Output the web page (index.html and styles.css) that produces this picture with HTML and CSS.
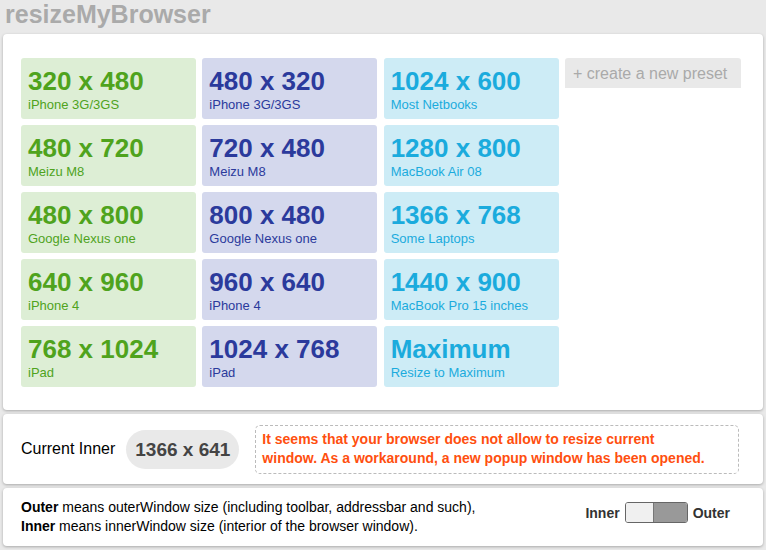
FILE: index.html
```html
<!DOCTYPE html>
<html lang="en">
<head>
    <meta charset="UTF-8">
    <meta name="viewport" content="width=device-width, initial-scale=1.0">
    <title>resizeMyBrowser</title>
    <link rel="stylesheet" href="styles.css">
</head>
<body>

    <h1 class="logo">resizeMyBrowser</h1>

    <div class="panel presets">
        <div class="col green">
            <a class="preset"><b>320 x 480</b><span>iPhone 3G/3GS</span></a>
            <a class="preset"><b>480 x 720</b><span>Meizu M8</span></a>
            <a class="preset"><b>480 x 800</b><span>Google Nexus one</span></a>
            <a class="preset"><b>640 x 960</b><span>iPhone 4</span></a>
            <a class="preset"><b>768 x 1024</b><span>iPad</span></a>
        </div>
        <div class="col blue">
            <a class="preset"><b>480 x 320</b><span>iPhone 3G/3GS</span></a>
            <a class="preset"><b>720 x 480</b><span>Meizu M8</span></a>
            <a class="preset"><b>800 x 480</b><span>Google Nexus one</span></a>
            <a class="preset"><b>960 x 640</b><span>iPhone 4</span></a>
            <a class="preset"><b>1024 x 768</b><span>iPad</span></a>
        </div>
        <div class="col cyan">
            <a class="preset"><b>1024 x 600</b><span>Most Netbooks</span></a>
            <a class="preset"><b>1280 x 800</b><span>MacBook Air 08</span></a>
            <a class="preset"><b>1366 x 768</b><span>Some Laptops</span></a>
            <a class="preset"><b>1440 x 900</b><span>MacBook Pro 15 inches</span></a>
            <a class="preset"><b>Maximum</b><span>Resize to Maximum</span></a>
        </div>
        <a class="new-preset">+ create a new preset</a>
    </div>

    <div class="panel current">
        <span class="current-label">Current Inner</span>
        <span class="current-size">1366 x 641</span>
        <div class="warning">It seems that your browser does not allow to resize current<br>
        window. As a workaround, a new popup window has been opened.</div>
    </div>

    <div class="panel info">
        <p class="info-text"><b>Outer</b> means outerWindow size (including toolbar, addressbar and such),<br>
        <b>Inner</b> means innerWindow size (interior of the browser window).</p>
        <div class="mode">
            <span>Inner</span>
            <span class="switch"><i class="switch-on"></i><i class="switch-off"></i></span>
            <span>Outer</span>
        </div>
    </div>

</body>
</html>
```

FILE: styles.css
```css
body {
    font-family: Arial, "Liberation Sans", sans-serif;
    background-color: #e9e9e9;
    margin: 0;
    padding: 0 3px;
}
.logo {
    font-size: 25px;
    line-height: 28px;
    color: #aaa;
    margin: 0 0 6px 2px;
}
.panel {
    background: white;
    border-radius: 4px;
    box-shadow: 0 1px 3px rgba(0,0,0,0.28);
    margin-bottom: 4px;
}
.presets {
    display: flex;
    gap: 6.33px;
    padding: 24px 18px 23px;
}
.col {
    display: flex;
    flex-direction: column;
    gap: 6px;
    width: 175px;
}
.preset {
    display: block;
    height: 61px;
    box-sizing: border-box;
    padding: 8px 7px 7px;
    border-radius: 3px;
    cursor: pointer;
}
.preset b {
    display: block;
    font-size: 26px;
    line-height: 30px;
}
.preset span {
    display: block;
    font-size: 13px;
    line-height: 17px;
}
.green .preset {
    background-color: #ddeed5;
    color: #4fa31d;
}
.blue .preset {
    background-color: #d4d8ed;
    color: #2b3a9c;
}
.cyan .preset {
    background-color: #cdecf6;
    color: #1babdd;
}
.new-preset {
    width: 176px;
    height: 30px;
    line-height: 32px;
    box-sizing: border-box;
    padding-left: 8px;
    font-size: 16px;
    color: #aaa;
    background-color: #e9e9e9;
    border-radius: 3px 3px 0 0;
    cursor: pointer;
}
.current {
    display: flex;
    align-items: center;
    height: 70px;
    padding-left: 18px;
}
.current-label {
    font-size: 16px;
    margin-right: 11px;
}
.current-size {
    font-size: 19px;
    font-weight: bold;
    color: #444;
    background-color: #e9e9e9;
    line-height: 39px;
    padding: 0 9px;
    border-radius: 20px;
}
.warning {
    width: 484px;
    box-sizing: border-box;
    margin-left: 16px;
    padding: 4px 6px 5px;
    border: 1px dashed #bbb;
    border-radius: 5px;
    font-size: 14px;
    font-weight: bold;
    line-height: 19px;
    color: #ff4f0f;
}
.info {
    display: flex;
    align-items: center;
    justify-content: space-between;
    height: 58px;
    padding: 0 33px 0 18px;
}
.info-text {
    margin: 0;
    font-size: 14px;
    line-height: 19px;
}
.mode {
    display: flex;
    align-items: center;
    gap: 5px;
    margin-bottom: 9px;
    font-size: 14px;
    font-weight: bold;
    color: #333;
}
.switch {
    display: flex;
    width: 63px;
    height: 21px;
    box-sizing: border-box;
    border: 1px solid #666;
    border-radius: 3px;
    overflow: hidden;
}
.switch-on {
    width: 27px;
    background-color: #f0f0f0;
    border-right: 1px solid #777;
}
.switch-off {
    flex: 1;
    background-color: #999;
}
```
